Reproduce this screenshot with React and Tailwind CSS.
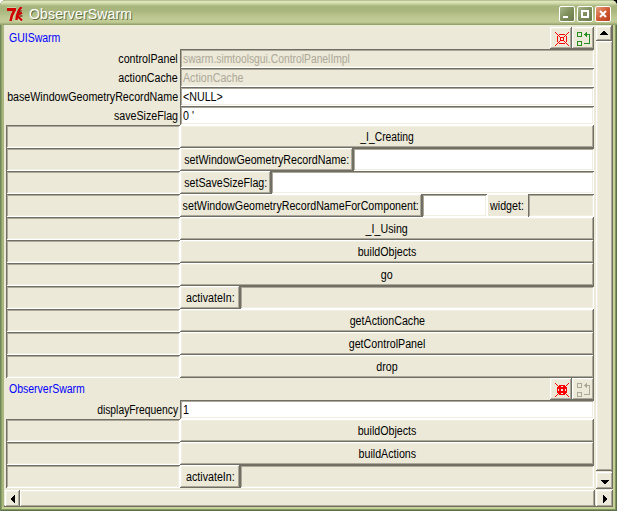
import React from "react";

const SUNKEN =
  "shadow-[inset_1px_1px_#716f64,inset_-1px_-1px_#ffffff,inset_2px_2px_#aca899,inset_-2px_-2px_#f1efe2]";
const RAISED =
  "shadow-[inset_-1px_-1px_#716f64,inset_1px_1px_#ffffff,inset_-2px_-2px_#aca899,inset_2px_2px_#f1efe2]";

const NORMAL = "scale-x-[0.89]";
const NARROW = "scale-x-[0.86]";

function Text({ scale = NORMAL, origin = "origin-center", children }) {
  return <span className={`inline-block shrink-0 ${scale} ${origin}`}>{children}</span>;
}

function Field({ value, disabled, scale }) {
  return (
    <div
      className={`flex h-full min-w-0 flex-1 items-center pl-[3px] ${SUNKEN} ${
        disabled ? "bg-[#ece9d8] text-[#aca899]" : "bg-white"
      }`}
    >
      <Text origin="origin-left" scale={scale}>
        {value}
      </Text>
    </div>
  );
}

function Property({ label, value, disabled, labelScale, valueScale }) {
  return (
    <div className="flex h-[19px]">
      <div className="flex w-[174px] items-center justify-end pr-[2px]">
        <Text origin="origin-right" scale={labelScale}>
          {label}
        </Text>
      </div>
      <Field value={value} disabled={disabled} scale={valueScale} />
    </div>
  );
}

function Message({ children }) {
  return (
    <div className="flex h-[23px]">
      <div className={`w-[174px] ${SUNKEN}`} />
      <div className="flex min-w-0 flex-1">{children}</div>
    </div>
  );
}

function Button({ className, children }) {
  return <button className={`flex h-full items-center justify-center ${RAISED} ${className}`}>{children}</button>;
}

function Action({ name, scale }) {
  return (
    <Message>
      <Button className="flex-1">
        <Text scale={scale}>{name}</Text>
      </Button>
    </Message>
  );
}

function TargetIcon({ filled }) {
  return (
    <svg width="22" height="22" shapeRendering="crispEdges">
      <path
        fill="#f00"
        d="M9 7h6v1h-6zM9 16h6v1h-6zM7 9h1v6h-1zM16 9h1v6h-1zM11 10h2v1h-2zM11 13h2v1h-2zM10 11h1v2h-1zM13 11h1v2h-1z"
      />
      {filled && <path fill="#f00" d="M9 8h6v1h1v6h-1v1h-6v-1h-1v-6h1z" />}
      {filled && <path fill="#ece9d8" d="M11 8h2v1h-2zM11 15h2v1h-2zM8 11h1v2h-1zM15 11h1v2h-1zM11 11h2v2h-2z" />}
      <path
        fill="#f00"
        d="M5 5h1v1h-1zM6 6h1v1h-1zM7 7h1v1h-1zM8 8h1v1h-1zM9 9h1v1h-1zM10 10h1v1h-1zM13 13h1v1h-1zM14 14h1v1h-1zM15 15h1v1h-1zM16 16h1v1h-1zM17 17h1v1h-1zM18 18h1v1h-1zM18 5h1v1h-1zM17 6h1v1h-1zM16 7h1v1h-1zM15 8h1v1h-1zM14 9h1v1h-1zM13 10h1v1h-1zM10 13h1v1h-1zM9 14h1v1h-1zM8 15h1v1h-1zM7 16h1v1h-1zM6 17h1v1h-1zM5 18h1v1h-1z"
      />
    </svg>
  );
}

function ReturnIcon({ color }) {
  return (
    <svg width="22" height="22" shapeRendering="crispEdges" fill="none" stroke={color}>
      <path d="M5.500 5.500h4v4h-4zM5.500 14.500h4v4h-4z" />
      <path d="M12 7.500h5.500v9h-5.500M13.500 6v3M14.500 5v5" />
    </svg>
  );
}

function Header({ name, filled, color }) {
  return (
    <div className="flex h-[22px] items-center pl-[3px]">
      <div className="flex flex-1 text-[#0000ff]">
        <Text origin="origin-left" scale="scale-x-[0.875]">
          {name}
        </Text>
      </div>
      <Button className="w-[22px]">
        <TargetIcon filled={filled} />
      </Button>
      <Button className="w-[22px]">
        <ReturnIcon color={color} />
      </Button>
    </div>
  );
}

function Arrow({ d }) {
  return (
    <svg width="16" height="16" shapeRendering="crispEdges" className="shrink-0">
      <path d={d} fill="#000" />
    </svg>
  );
}

function TitleButton({ close, children }) {
  return (
    <div
      className={`flex h-4 w-4 items-center justify-center rounded-[2px] border border-white bg-gradient-to-br ${
        close ? "from-[#e5a080] via-[#d25a32] to-[#b83f1c]" : "from-[#a9b68a] via-[#7f8f5c] to-[#6b7a4c]"
      }`}
    >
      <svg width="14" height="14" shapeRendering="crispEdges" fill="none" stroke="#fff" strokeWidth="2">
        {children}
      </svg>
    </div>
  );
}

function TkLogo() {
  return (
    <svg width="17" height="15" fill="none" stroke="#d00000">
      <path d="M0 2h9M8 2L3 14M14 1l-4 6M10 9l5 5" stroke="#f0f0d8" strokeWidth="4" opacity=".45" />
      <path d="M0 2.500h9" strokeWidth="3" />
      <path d="M7.500 3Q4.500 8 3.500 14" strokeWidth="2.600" />
      <path d="M14.500 0Q10 4 9.500 13" strokeWidth="2.400" />
      <path d="M10 8.500l5-3M10.500 9l4.500 4.500" strokeWidth="2.200" />
      <path d="M11.500 6l3-3M12.500 9h3" stroke="#500000" />
    </svg>
  );
}

export default function App() {
  return (
    <div className="h-[511px] w-[617px] overflow-hidden bg-gradient-to-r from-white from-50% to-black to-50% font-['Liberation_Sans',Arial,sans-serif] text-[12px] leading-[14px] whitespace-nowrap text-black">
      <div className="flex h-full w-full flex-col rounded-t-[6px] bg-[#a7b77e] shadow-[inset_1px_0_#71875a,inset_-1px_-1px_#5c7148,inset_-2px_-2px_#82965f,inset_2px_0_#8c9f68,inset_-4px_-4px_#c5d095]">
        <div className="flex h-[25px] shrink-0 items-center rounded-t-[6px] bg-[linear-gradient(#8a9c68_0px,#e2e9c0_1px,#d5deb0_3px,#a8b67e_6px,#a8b67e_11px,#bdc790_17px,#c2cc96_22px,#9fad76_24px,#8a9b64_25px)] pt-[3px] pr-[6px] pl-[7px]">
          <TkLogo />
          <span className="flex-1 pl-[5px] text-[14px] tracking-[0.15px] text-white [text-shadow:1px_1px_#5f6e43]">
            ObserverSwarm
          </span>
          <div className="flex gap-[2px]">
            <TitleButton>
              <path d="M3 10h5" />
            </TitleButton>
            <TitleButton>
              <path d="M4 4h6v6h-6z" />
            </TitleButton>
            <TitleButton close>
              <path d="M4 4l6 6M10 4l-6 6" shapeRendering="auto" />
            </TitleButton>
          </div>
        </div>
        <div className="mr-[4px] mb-[4px] ml-[4px] flex min-h-0 flex-1 flex-col bg-[#ece9d8]">
          <div className="flex h-[464px] shrink-0">
            <div className="ml-[2px] w-[588px] pt-[2px]">
              <Header name="GUISwarm" color="#229022" />
              <Property
                label="controlPanel"
                value="swarm.simtoolsgui.ControlPanelImpl"
                valueScale={NARROW}
                disabled
              />
              <Property label="actionCache" value="ActionCache" disabled />
              <Property label="baseWindowGeometryRecordName" value="<NULL>" />
              <Property label="saveSizeFlag" value="0 '" />
              <Action name="_I_Creating" scale={NARROW} />
              <Message>
                <Button className="w-[173px]">
                  <Text>setWindowGeometryRecordName:</Text>
                </Button>
                <Field />
              </Message>
              <Message>
                <Button className="w-[91px]">
                  <Text>setSaveSizeFlag:</Text>
                </Button>
                <Field />
              </Message>
              <Message>
                <Button className="w-[242px]">
                  <Text>setWindowGeometryRecordNameForComponent:</Text>
                </Button>
                <Field />
                <div className="flex h-full w-[41px] items-center justify-center shadow-[inset_1px_1px_#fff,inset_0_-1px_#fff]">
                  <Text>widget:</Text>
                </div>
                <div className="flex w-[66px]">
                  <Field disabled />
                </div>
              </Message>
              <Action name="_I_Using" />
              <Action name="buildObjects" />
              <Action name="go" />
              <Message>
                <Button className="w-[60px]">
                  <Text>activateIn:</Text>
                </Button>
                <Field disabled />
              </Message>
              <Action name="getActionCache" />
              <Action name="getControlPanel" />
              <Action name="drop" />
              <Header name="ObserverSwarm" filled color="#aca899" />
              <Property label="displayFrequency" value="1" labelScale={NARROW} />
              <Action name="buildObjects" />
              <Action name="buildActions" />
              <Message>
                <Button className="w-[60px]">
                  <Text>activateIn:</Text>
                </Button>
                <Field disabled />
              </Message>
            </div>
            <div className="ml-[2px] flex w-[17px] flex-col pt-px shadow-[inset_-1px_0_#716f64,inset_-2px_0_#aca899]">
              <Button className="h-[15px]! w-[16px]">
                <Arrow d="M7 5h2v1h1v1h1v1h1v1h-8v-1h1v-1h1v-1h1z" />
              </Button>
              <Button className="h-[431px]! w-[17px]" />
              <Button className="mt-px h-[17px]! w-[17px]">
                <Arrow d="M4 7h8v1h-1v1h-1v1h-1v1h-2v-1h-1v-1h-1v-1h-1z" />
              </Button>
            </div>
          </div>
          <div className="mt-px flex h-[17px] pl-px shadow-[inset_0_-1px_#716f64,inset_0_-2px_#aca899]">
            <Button className="w-[15px]">
              <Arrow d="M10 4v8h-1v-1h-1v-1h-1v-1h-1v-2h1v-1h1v-1h1v-1z" />
            </Button>
            <Button className="w-[575px]" />
            <Button className="ml-px w-[17px]">
              <Arrow d="M6 4v8h1v-1h1v-1h1v-1h1v-2h-1v-1h-1v-1h-1v-1z" />
            </Button>
          </div>
        </div>
      </div>
    </div>
  );
}
